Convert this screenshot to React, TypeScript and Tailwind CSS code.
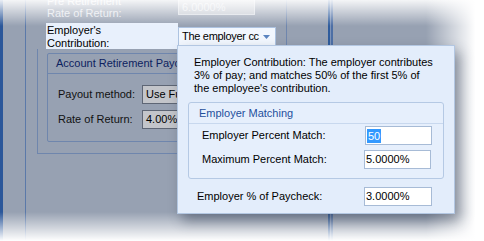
import React from 'react';

const Field = ({ value, selected, className }: { value: string; selected?: boolean; className?: string }) => (
  <div className={`h-[19px] bg-white border border-[#a7bbd6] flex items-center pl-[1px] text-black ${className ?? ''}`}>
    {selected ? <span className="bg-[#3399ff] text-white leading-[14px] px-[1px]">{value}</span> : value}
  </div>
);

const App = () => {
  return (
    <div className="relative w-[484px] h-[241px] overflow-hidden bg-[#97a1b2] font-['Liberation_Sans',Arial,sans-serif] text-[11px] leading-[13px] whitespace-nowrap">
      {/* dimmed form behind the popup */}
      <div className="flex h-full">
        <div className="w-[3px] bg-[#2b579a]" />
        <div className="w-[22px]" />
        <div className="w-px bg-[#5b79a9]" />
        <div className="flex-1 flex items-start">
          <div className="w-[261px] h-[154px] flex flex-col border-r border-[#6f86ad]">
            <div className="flex h-[23px]">
              <div className="w-[152px] pl-[21px] pt-[7px] text-[#e3e6ec] relative">
                <div className="absolute left-[21px] -top-[5px] text-[#eceef2]">Pre Retirement</div>
                Rate of Return:
              </div>
              <div className="w-[77px] h-[19px] -mt-[4px] border border-[#d9dde4] bg-[#c3c8d1] text-[#e8ebf0] pl-[3px] pt-[4px]">6.0000%</div>
            </div>
            <div className="flex h-[26px]">
              <div className="ml-[20px] w-[132px] bg-[#e8f0fc] pl-[1px] pt-[1px] text-black">
                Employer's
                <br />
                Contribution:
              </div>
              <div className="mt-[4px] w-[98px] h-[19px] bg-[#f2f7fe] border border-[#adc3e1] flex items-center pl-[3px] text-black">
                <span className="tracking-[-0.3px]">The employer cc</span>
                <svg className="ml-auto mr-[5px] shrink-0" width="7" height="4" viewBox="0 0 7 4">
                  <path d="M0 0h7L3.5 4z" fill="#5a84c0" />
                </svg>
              </div>
            </div>
            <div className="ml-[11px] flex-1 border-l border-b border-[#6f86ad] pl-[9px] pr-[9px] pt-[4px]">
              <div className="h-[89px] border border-[#6f86ad] rounded-[2px]">
                <div className="h-[20px] border-b border-[#6f86ad] pl-[8px] flex items-center text-[#0d2160]">
                  Account Retirement Payout
                </div>
                <div className="flex items-center h-[19px] mt-[11px]">
                  <div className="w-[94px] shrink-0 pl-[10px] text-[#111]">Payout method:</div>
                  <div className="w-[60px] h-[19px] bg-[#c3c5ca] border border-[#5e6675] pl-[3px] flex items-center">Use Full</div>
                </div>
                <div className="flex items-center h-[19px] mt-[6px]">
                  <div className="w-[94px] shrink-0 pl-[10px] text-[#111]">Rate of Return:</div>
                  <div className="w-[60px] h-[19px] bg-[#c3c5ca] border border-[#5e6675] pl-[3px] flex items-center">4.00%</div>
                </div>
              </div>
            </div>
          </div>
          <div className="w-[41px]" />
          <div className="w-[5px] h-full flex">
            <div className="w-[2px] bg-[#2f5c9c]" />
            <div className="w-[1px] bg-[#7d93b8]" />
            <div className="w-[2px] bg-[#4d6fa5]" />
          </div>
        </div>
      </div>

      {/* vignette fades */}
      <div className="absolute left-0 top-0 w-full h-[26px] bg-linear-to-b from-white/90 to-transparent" />
      <div className="absolute left-0 top-[212px] w-full h-[29px] bg-linear-to-t from-white to-transparent" />
      <div className="absolute right-0 top-0 w-[58px] h-full bg-linear-to-l from-white from-15% to-transparent" />

      {/* popup */}
      <div className="absolute left-[177px] top-[45px] w-[278px] h-[169px] bg-[#e3edfb] border border-[#b3c7e2] shadow-[5px_7px_12px_rgba(40,50,70,0.45)] text-black">
        <div className="pl-[16px] pt-[10px]">
          Employer Contribution: The employer contributes
          <br />
          3% of pay; and matches 50% of the first 5% of
          <br />
          the employee's contribution.
        </div>
        <div className="mx-[10px] mt-[7px] h-[77px] border border-[#b5c9e4] rounded-[3px] bg-[#e6effc]">
          <div className="h-[21px] border-b border-[#c8d8ee] pl-[10px] flex items-center text-[#1f4f9c]">Employer Matching</div>
          <div className="flex items-center mt-[2px] pl-[13px]">
            <div className="w-[163px]">Employer Percent Match:</div>
            <Field value="50" selected className="w-[67px]" />
          </div>
          <div className="flex items-center mt-[5px] pl-[13px]">
            <div className="w-[162px]">Maximum Percent Match:</div>
            <Field value="5.0000%" className="w-[67px]" />
          </div>
        </div>
        <div className="flex items-center mt-[8px] pl-[19px]">
          <div className="w-[167px]">Employer % of Paycheck:</div>
          <Field value="3.0000%" className="w-[68px]" />
        </div>
      </div>
    </div>
  );
};

export default App;
